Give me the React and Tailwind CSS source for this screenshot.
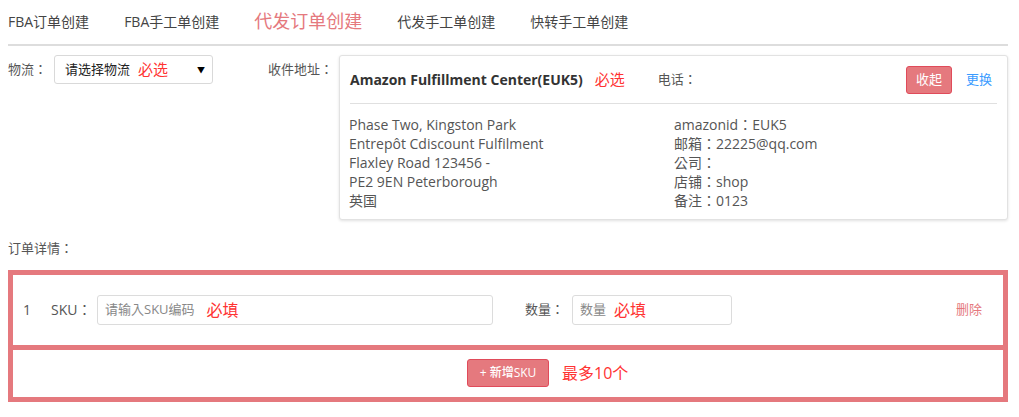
const tabs = [
  { label: 'FBA订单创建' },
  { label: 'FBA手工单创建' },
  { label: '代发订单创建', active: true },
  { label: '代发手工单创建' },
  { label: '快转手工单创建' },
];

const addressLines = [
  'Phase Two, Kingston Park',
  'Entrepôt Cdiscount Fulfilment',
  'Flaxley Road 123456 -',
  'PE2 9EN Peterborough',
  '英国',
];

const contactLines = ['amazonid：EUK5', '邮箱：22225@qq.com', '公司：', '店铺：shop', '备注：0123'];

const font = { fontFamily: '"Open Sans", "Noto Sans CJK TC", sans-serif' };

function AddressCard() {
  return (
    <div className="w-[669px] rounded-[3px] border border-[#e2e2e2] bg-white shadow-[0_1px_3px_rgba(0,0,0,0.12)]">
      <div className="mx-[10px] flex h-[48px] items-center border-b border-[#e0e0e0]">
        <span className="text-[14px] font-bold text-[#333]">Amazon Fulfillment Center(EUK5)</span>
        <span className="ml-[12px] text-[15px] text-[#f33]">必选</span>
        <span className="ml-[33px] text-[13px] text-[#555]">电话：</span>
        <button className="ml-auto h-[28px] w-[46px] rounded-[3px] border border-[#e04b5a] bg-[#e5797e] text-[13px] text-white">
          收起
        </button>
        <a className="ml-[14px] mr-[5px] text-[13px] text-[#3a9bff]">更换</a>
      </div>
      <div className="flex pl-[9px] pr-[10px] pt-[11px] pb-[9px] text-[14px] leading-[19px] text-[#555]">
        <div className="w-[325px]">
          {addressLines.map((l) => (
            <div key={l}>{l}</div>
          ))}
        </div>
        <div>
          {contactLines.map((l) => (
            <div key={l}>{l}</div>
          ))}
        </div>
      </div>
    </div>
  );
}

export default function App() {
  return (
    <div className="h-[417px] w-[1019px] bg-white px-[8px]" style={font}>
      <div className="flex h-[46px] w-[1000px] items-center gap-[35px] border-b-2 border-[#dddddd] pb-[2px]">
        {tabs.map((t) =>
          t.active ? (
            <span key={t.label} className="text-[18px] text-[#e5797e]">
              {t.label}
            </span>
          ) : (
            <span key={t.label} className="text-[14px] text-[#444]">
              {t.label}
            </span>
          )
        )}
      </div>

      <div className="mt-[9px] flex items-start">
        <div className="flex h-[29px] items-center">
          <span className="w-[46px] text-[13px] text-[#555]">物流：</span>
          <div className="flex h-[29px] w-[159px] items-center rounded-[3px] border border-[#d9d9d9] pl-[10px] pr-[7px]">
            <span className="text-[13px] text-[#222]">请选择物流</span>
            <span className="ml-[8px] text-[15px] text-[#f33]">必选</span>
            <span className="ml-auto text-[8px] text-black">▼</span>
          </div>
        </div>
        <span className="ml-[55px] mt-[5px] w-[71px] text-[13px] text-[#555]">收件地址：</span>
        <AddressCard />
      </div>

      <div className="mt-[19px] text-[13px] text-[#555]">订单详情：</div>

      <div className="mt-[11px] w-[1000px]">
        <div className="flex h-[80px] items-center border-[5px] border-[#e5797e] pl-[10px] pr-[21px] text-[14px] text-[#555]">
          <span className="w-[28px]">1</span>
          <span className="w-[46px]">SKU：</span>
          <div className="flex h-[30px] w-[396px] items-center rounded-[3px] border border-[#dcdcdc] pl-[7px]">
            <span className="text-[13px] text-[#888]">请输入SKU编码</span>
            <span className="ml-[12px] text-[16px] text-[#f33]">必填</span>
          </div>
          <span className="ml-[32px] w-[47px] text-[13px]">数量：</span>
          <div className="flex h-[30px] w-[160px] items-center rounded-[3px] border border-[#dcdcdc] pl-[7px]">
            <span className="text-[13px] text-[#888]">数量</span>
            <span className="ml-[8px] text-[16px] text-[#f33]">必填</span>
          </div>
          <span className="ml-auto text-[13px] text-[#e5797e]">删除</span>
        </div>
        <div className="grid h-[52px] grid-cols-[1fr_auto_1fr] items-center border-[5px] border-t-0 border-[#e5797e]">
          <div />
          <button className="h-[28px] w-[82px] rounded-[3px] border border-[#e04b5a] bg-[#e5797e] text-[12px] font-medium text-white">
            + 新增SKU
          </button>
          <span className="ml-[13px] text-[16px] text-[#f33]">最多10个</span>
        </div>
      </div>
    </div>
  );
}
